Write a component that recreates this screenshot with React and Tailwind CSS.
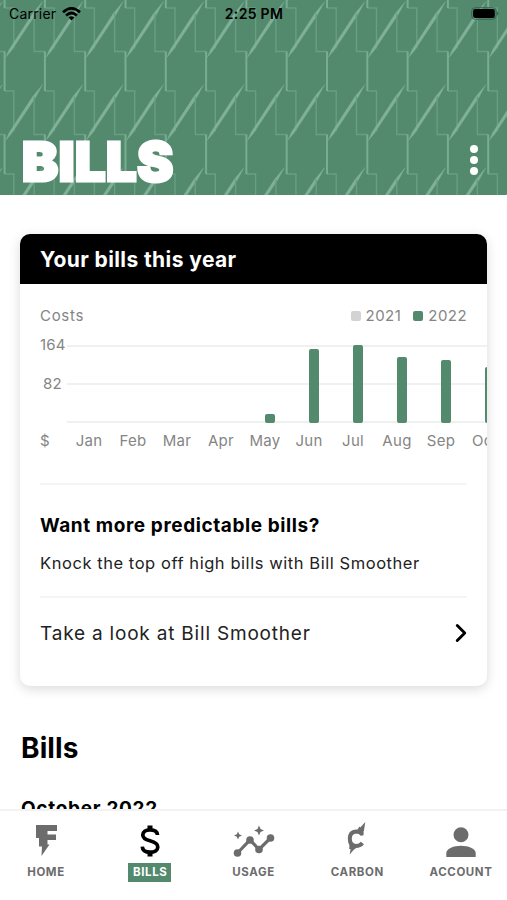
import { ChevronRight } from "lucide-react";

const months = [
  { label: "Jan", height: 0 },
  { label: "Feb", height: 0 },
  { label: "Mar", height: 0 },
  { label: "Apr", height: 0 },
  { label: "May", height: 9 },
  { label: "Jun", height: 74 },
  { label: "Jul", height: 78 },
  { label: "Aug", height: 66 },
  { label: "Sep", height: 63 },
  { label: "Oct", height: 56 },
];

function HeaderPattern() {
  const tiles = [];
  for (let row = -1; row < 3; row++) {
    for (let col = -2; col < 13; col++) {
      tiles.push({ x: 4.6 + col * 40.3, y: 51.5 + row * 83 });
    }
  }

  return (
    <svg className="absolute inset-0" width="507" height="195" fill="none">
      {tiles.map(({ x, y }) => (
        <g key={`${x}-${y}`} transform={`translate(${x} ${y})`}>
          <path d="M-10.8 -38V0H0M0 39.5H9.2V80" stroke="#689f82" strokeWidth="1.4" />
          <path d="M0 0V39.5" stroke="#79ad91" strokeWidth="2" />
          <path d="M1 6L4.5 -2L28 -38L38 -50L31 -37L7 -1Z" fill="#80b198" stroke="#80b198" strokeWidth=".3" />
        </g>
      ))}
    </svg>
  );
}

function StatusBar() {
  return (
    <div className="relative flex h-7 items-center justify-between pl-[9px] pr-[8px] text-black">
      <div className="flex w-[150px] items-center gap-[6px]">
        <span className="-mt-px text-[14px] tracking-[0.2px]">Carrier</span>
        <svg className="-mt-px" width="19" height="14" viewBox="0 0 19 14" fill="none" stroke="currentColor" strokeWidth="2.7">
          <path d="M1 5.2Q9.5 -2.4 18 5.2" />
          <path d="M4.1 8.4Q9.5 3.6 14.9 8.4" />
          <path d="M9.5 13.4L6.6 10.5Q9.5 8.1 12.4 10.5Z" fill="currentColor" stroke="none" />
        </svg>
      </div>
      <span className="-mt-px text-[14px] font-semibold tracking-[0.3px]">2:25 PM</span>
      <div className="flex w-[150px] justify-end">
        <svg width="28" height="14" viewBox="0 0 28 14">
          <rect x=".7" y=".7" width="24.5" height="11.6" rx="3.5" fill="none" stroke="#356650" strokeWidth="1" />
          <rect x="2.1" y="2.1" width="21.7" height="8.8" rx="2" />
          <path d="M26 4.5Q29 6.5 26 8.5Z" fill="#356650" />
        </svg>
      </div>
    </div>
  );
}

function Legend({ color, label }) {
  return (
    <div className="flex items-center gap-[5px]">
      <span className={`size-[10px] rounded-[2px] ${color}`} />
      <span className="tracking-[0.45px]">{label}</span>
    </div>
  );
}

function CostChart() {
  return (
    <div className="flex h-[117px] pl-5 text-[15px] leading-5 text-[#858585]">
      <div className="flex w-[27px] shrink-0 flex-col">
        <span className="h-[39px] tracking-[0.2px]">164</span>
        <span className="h-[57px] pl-[3px] tracking-[0.3px]">82</span>
        <span>$</span>
      </div>
      <div className="relative min-w-0 flex-1 overflow-hidden">
        <div className="flex h-[88px] flex-col justify-between pt-[10px]">
          <div className="h-[2px] bg-[#f0f0f0]" />
          <div className="h-[2px] bg-[#f0f0f0]" />
          <div className="h-[2px] bg-[#f0f0f0]" />
        </div>
        <div className="absolute left-0 top-0 flex">
          {months.map((month) => (
            <div key={month.label} className="flex w-[44px] shrink-0 flex-col items-center">
              <div className="flex h-[88px] items-end pl-[10px]">
                <div className="w-[10px] rounded-[2px] bg-[#53896d]" style={{ height: month.height }} />
              </div>
              <span className="mt-[8px] tracking-[0.3px]">{month.label}</span>
            </div>
          ))}
        </div>
      </div>
    </div>
  );
}

function BillsCard() {
  return (
    <section className="mx-auto mt-[39px] h-[452px] w-[467px] overflow-hidden rounded-[10px] bg-white shadow-[0_3px_12px_rgba(0,0,0,0.15)]">
      <h2 className="flex h-[50px] items-center bg-black pl-5 pt-[2px] text-[21px] font-bold tracking-[0.4px] text-white">
        Your bills this year
      </h2>
      <div className="flex h-[51px] items-end justify-between px-5 pb-[8px] text-[15px] text-[#858585]">
        <span className="tracking-[0.7px]">Costs</span>
        <div className="flex gap-3">
          <Legend color="bg-[#d3d3d3]" label="2021" />
          <Legend color="bg-[#53896d]" label="2022" />
        </div>
      </div>
      <CostChart />
      <div className="mx-5 mt-[31px] border-t-2 border-[#f5f5f5] pt-[29px]">
        <h3 className="text-[19px] font-bold leading-6 tracking-[0.58px]">Want more predictable bills?</h3>
        <p className="mt-[13px] text-[16.5px] leading-6 tracking-[0.56px] text-[#222]">
          Knock the top off high bills with Bill Smoother
        </p>
      </div>
      <div className="mx-5 mt-[21px] flex h-[74px] items-center justify-between border-t-2 border-[#f5f5f5]">
        <span className="text-[19px] tracking-[0.8px] text-[#222]">Take a look at Bill Smoother</span>
        <ChevronRight className="-mr-[9px] -mt-[3px] size-[30px] text-black" strokeWidth={2.3} />
      </div>
    </section>
  );
}

function HomeIcon() {
  return (
    <svg width="34" height="36" viewBox="0 0 34 36" fill="currentColor">
      <path d="M7 3H28V9H18.5V12.5H27V18H18.5V22.5H20.5L12.5 34L13 24.5H10V16H7Z" />
    </svg>
  );
}

function DollarIcon() {
  return (
    <svg width="34" height="36" viewBox="0 0 34 36" fill="none" stroke="currentColor" strokeWidth="3.7">
      <path d="M24.5 13C24.3 9.7 21.5 7.8 17 7.8C12.6 7.8 9.8 9.8 9.8 13C9.8 16.2 12.5 17.6 17 18.8C22 20.1 24.8 21.6 24.8 25C24.8 28.3 21.7 30.2 17 30.2C12.3 30.2 9.5 28 9.3 24.6" />
      <path d="M17 3.5V9M17 29V34.5" strokeWidth="5" />
    </svg>
  );
}

function UsageIcon() {
  return (
    <svg width="42" height="36" viewBox="0 0 42 36" fill="currentColor">
      <path d="M4.5 31L17 17.8L26 27.5L37.5 16" fill="none" stroke="currentColor" strokeWidth="3.2" />
      <circle cx="4.5" cy="31" r="3.8" />
      <circle cx="17" cy="18" r="3.8" />
      <circle cx="26" cy="27.5" r="3.8" />
      <circle cx="37.5" cy="16" r="3.8" />
      <path d="M5 9.5L6.2 12.3L9 13.5L6.2 14.7L5 17.5L3.8 14.7L1 13.5L3.8 12.3Z" />
      <path d="M26 3.5L27.5 7L31 8.5L27.5 10L26 13.5L24.5 10L21 8.5L24.5 7Z" />
    </svg>
  );
}

function CarbonIcon() {
  return (
    <svg width="34" height="36" viewBox="0 0 34 36" fill="currentColor">
      <path d="M22.4 12.6Q20 9.6 16 9.6Q9.8 10 9.8 16.8Q9.8 23.6 16 24Q20 24 22.4 21" fill="none" stroke="currentColor" strokeWidth="4" />
      <path d="M16.5 9L19.5 4.5L20.3 5.5L25.3 0L23.8 9.5H23.4V13.5H21L19 10Z" />
      <path d="M9.5 22L16 24.5L15.3 27.2H14.2L9.7 32.5L10.6 27H9.2Z" />
    </svg>
  );
}

function AccountIcon() {
  return (
    <svg width="34" height="36" viewBox="0 0 34 36" fill="currentColor">
      <circle cx="17" cy="12.8" r="7.5" />
      <path d="M2.3 35V31C2.3 26.5 10 23.7 17 23.7S31.7 26.5 31.7 31V35Z" />
    </svg>
  );
}

const tabs = [
  { label: "HOME", Icon: HomeIcon },
  { label: "BILLS", Icon: DollarIcon, active: true },
  { label: "USAGE", Icon: UsageIcon },
  { label: "CARBON", Icon: CarbonIcon },
  { label: "ACCOUNT", Icon: AccountIcon },
];

function TabBar() {
  return (
    <nav className="flex h-[91px] shrink-0 justify-between border-t-2 border-[#f2f2f2] bg-white pt-[11px]">
      {tabs.map(({ label, Icon, active }) => (
        <div
          key={label}
          className={`flex w-[92px] flex-col items-center ${active ? "text-black" : "text-[#6c6c6c]"}`}
        >
          <Icon />
          <span
            className={`mt-[5px] flex h-[19px] items-center px-1 text-[11.5px] font-bold tracking-[0.6px] ${
              active ? "bg-[#53896d] pl-[5px] text-white" : ""
            }`}
          >
            {label}
          </span>
        </div>
      ))}
    </nav>
  );
}

export default function App() {
  return (
    <div className="flex h-[900px] w-[507px] flex-col overflow-hidden bg-white font-['Inter',sans-serif] text-black">
      <header className="relative flex h-[195px] shrink-0 flex-col justify-between overflow-hidden bg-[#53896d]">
        <HeaderPattern />
        <StatusBar />
        <div className="relative flex items-end justify-between pl-[22px] pr-[29px] pb-[6px]">
          <h1 className="text-[54px] font-black leading-[54px] tracking-[0.6px] text-white [-webkit-text-stroke:3px_white]">
            BILLS
          </h1>
          <div className="mb-[14px] flex flex-col gap-[3px]">
            <span className="size-2 rounded-full bg-white" />
            <span className="size-2 rounded-full bg-white" />
            <span className="size-2 rounded-full bg-white" />
          </div>
        </div>
      </header>

      <main className="min-h-0 flex-1 overflow-hidden">
        <BillsCard />
        <div className="px-[21px] pt-[45px]">
          <h2 className="text-[28px] font-bold leading-[34px] tracking-[0.1px]">Bills</h2>
          <h3 className="mt-[32px] text-[19px] font-bold leading-6 tracking-[0.7px]">October 2022</h3>
        </div>
      </main>

      <TabBar />
    </div>
  );
}
